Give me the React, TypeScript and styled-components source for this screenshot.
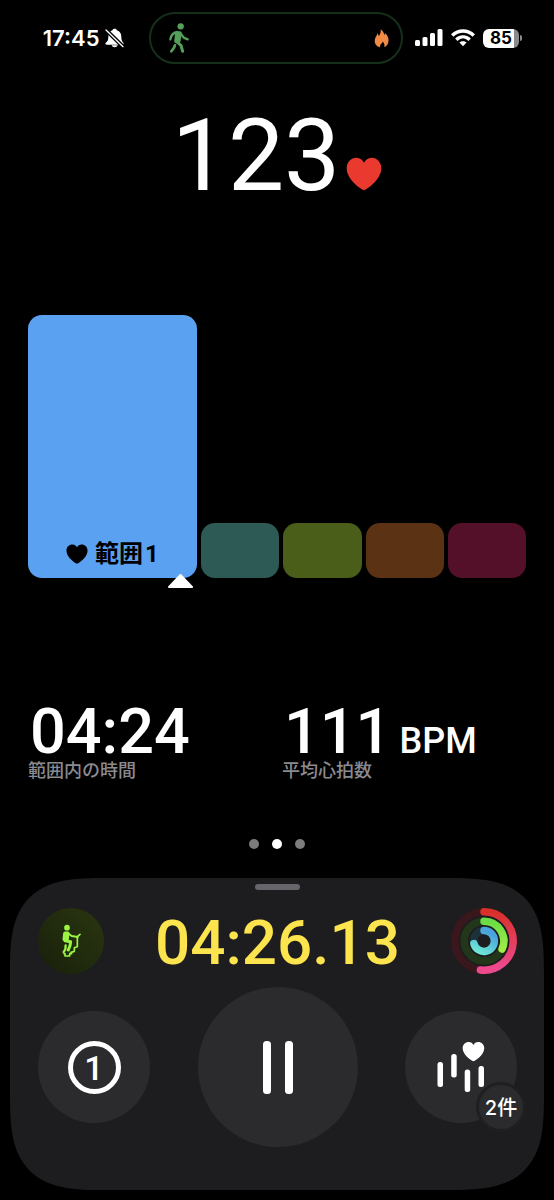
import React from "react";
import styled, { createGlobalStyle } from "styled-components";

const Global = createGlobalStyle`
  * { box-sizing: border-box; }
  html, body { margin: 0; background: #000; }
  body {
    color: #fff;
    font-family: Inter, "Noto Sans CJK JP", sans-serif;
    -webkit-font-smoothing: antialiased;
  }
  button { font: inherit; color: inherit; border: 0; padding: 0; background: none; cursor: pointer; }
  p, h1, dl, dd, dt { margin: 0; font-weight: inherit; }
  svg { display: block; flex: none; }
`;

const NUMERIC = `Roboto, "Noto Sans CJK JP", sans-serif`;

const Screen = styled.div`
  min-height: 100vh;
  display: flex;
  flex-direction: column;
  padding: 12px 10px 10px;
`;

const StatusBar = styled.header`
  display: grid;
  grid-template-columns: 1fr 254px 1fr;
  align-items: center;
  padding-right: 3px;
  height: 52px;
`;

const StatusGroup = styled.div<{ $end?: boolean }>`
  display: flex;
  align-items: center;
  justify-content: flex-end;
  gap: ${(p) => (p.$end ? "8px" : "5px")};
  padding-right: ${(p) => (p.$end ? "19px" : "25px")};
`;

const Clock = styled.time`
  font-size: 22px;
  line-height: 28px;
  font-weight: 600;
`;

const Island = styled.div`
  height: 52px;
  border: 2px solid #15301a;
  border-radius: 26px;
  display: flex;
  align-items: center;
  justify-content: space-between;
  padding: 0 12px 0 16px;
`;

const Battery = styled.div`
  display: flex;
  align-items: center;
  gap: 1px;
`;

const BatteryBody = styled.div`
  width: 36px;
  height: 19px;
  border-radius: 6px;
  background: linear-gradient(90deg, #fff 85%, #8b8b8b 85%);
  color: #000;
  font-size: 17px;
  line-height: 19px;
  font-weight: 700;
  text-align: center;
`;

const BatteryCap = styled.div`
  width: 2px;
  height: 6px;
  border-radius: 0 2px 2px 0;
  background: #8b8b8b;
`;

const Metrics = styled.main`
  flex: 1;
  padding: 41px 18px 0;
`;

const HeartRate = styled.h1`
  display: flex;
  justify-content: center;
  align-items: flex-end;
  gap: 6px;
  height: 100px;
  font-family: ${NUMERIC};
  font-size: 100px;
  line-height: 98px;
  font-weight: 400;
  svg { margin-bottom: 14px; }
`;

const Zones = styled.div`
  display: grid;
  grid-template-columns: minmax(0, 216fr) repeat(4, minmax(0, 100fr));
  gap: 4px;
  align-items: end;
  margin-top: 110px;
`;

const Zone = styled.div<{ $color: string; $active?: boolean }>`
  position: relative;
  height: ${(p) => (p.$active ? "263px" : "55px")};
  border-radius: 14px;
  background: ${(p) => p.$color};
`;

const ZoneLabel = styled.div`
  height: 100%;
  display: flex;
  align-items: flex-end;
  justify-content: center;
  gap: 7px;
  padding-bottom: 8px;
  color: #000;
  font-family: ${NUMERIC};
  font-size: 24px;
  line-height: 32px;
  font-weight: 700;
  svg { margin-bottom: 6px; }
`;

const ZoneNumber = styled.span`
  margin-left: 2px;
`;

const ZoneMarker = styled.svg`
  position: absolute;
  right: 4px;
  bottom: -10px;
`;

const Stats = styled.dl`
  display: grid;
  grid-template-columns: 1fr 1fr;
  gap: 10px;
  margin-top: 122px;
`;

const Stat = styled.div`
  display: flex;
  flex-direction: column-reverse;
`;

const StatValue = styled.dd`
  display: flex;
  align-items: baseline;
  gap: 8px;
  height: 61px;
  padding-left: 2px;
  font-family: ${NUMERIC};
  font-size: 63px;
  line-height: 64px;
  font-weight: 500;
`;

const Unit = styled.span`
  font-size: 36px;
  line-height: 36px;
`;

const StatName = styled.dt`
  color: #8a8a8f;
  font-size: 18px;
  line-height: 20px;
  font-weight: 500;
`;

const Pager = styled.nav`
  display: flex;
  justify-content: center;
  gap: 13px;
  margin-top: 58px;
  padding-bottom: 29px;
`;

const Dot = styled.button<{ $on?: boolean }>`
  width: 10px;
  height: 10px;
  border-radius: 50%;
  background: ${(p) => (p.$on ? "#fff" : "#7c7c7c")};
`;

const Panel = styled.section`
  background: #1d1d1f;
  border-radius: 68px;
  padding: 6px 27px 43px 28px;
  @supports (corner-shape: superellipse(1.6)) {
    border-radius: 96px;
    corner-shape: superellipse(1.6);
  }
`;

const Grabber = styled.div`
  width: 45px;
  height: 6px;
  margin: 0 auto;
  border-radius: 3px;
  background: #66656b;
`;

const TimerRow = styled.div`
  display: flex;
  align-items: center;
  justify-content: space-between;
  margin-top: 18px;
`;

const WorkoutBadge = styled.div`
  width: 66px;
  height: 66px;
  border-radius: 50%;
  background: linear-gradient(45deg, #18200a, #2a3611);
  display: grid;
  place-items: center;
`;

const Timer = styled.time`
  height: 66px;
  color: #fbe44d;
  font-family: ${NUMERIC};
  font-size: 62px;
  line-height: 70px;
  font-weight: 500;
`;

const Controls = styled.div`
  display: flex;
  align-items: center;
  justify-content: space-between;
  margin-top: 13px;
`;

const RoundButton = styled.button<{ $size: number }>`
  position: relative;
  width: ${(p) => p.$size}px;
  height: ${(p) => p.$size}px;
  border-radius: 50%;
  background: #2b2b2d;
  display: grid;
  place-items: center;
`;

const LapNumber = styled.span`
  width: 53px;
  height: 53px;
  border: 5px solid #fff;
  border-radius: 50%;
  font-family: ${NUMERIC};
  font-size: 34px;
  line-height: 44px;
  font-weight: 500;
  text-align: center;
`;

const CountBadge = styled.span`
  position: absolute;
  right: -9px;
  bottom: -9px;
  width: 50px;
  height: 50px;
  border: 3px solid #1f1f21;
  border-radius: 50%;
  background: #2b2b2d;
  font-size: 20px;
  line-height: 46px;
  font-weight: 500;
  text-align: center;
  white-space: nowrap;
`;

const HEART =
  "M50 94 C46 94 2 66 2 32 C2 14 14 2 29 2 C39 2 46 8 50 16 C54 8 61 2 71 2 C86 2 98 14 98 32 C98 66 54 94 50 94 Z";

const Heart = ({ width, height, color }: { width: number; height: number; color: string }) => (
  <svg width={width} height={height} viewBox="0 0 100 96" preserveAspectRatio="none" aria-hidden="true">
    <path d={HEART} fill={color} />
  </svg>
);

const MutedBell = () => (
  <svg width="19" height="20" viewBox="0 0 57 60" aria-hidden="true">
    <path
      d="M29 2c4 0 6 2 6.500 5C45 10 49 17 49 27c0 9 2 13 6 17 2 3 0 6-3 6H6c-4 0-6-3-4-6 6-4 8-8 8-17 0-10 4-17 12-20C23 4 25 2 29 2zM20 52h18c-1 4-5 6-9 6s-8-2-9-6z"
      fill="#fff"
    />
    <path d="M1 4L55 57" stroke="#000" strokeWidth="12" />
    <path d="M3 6L54 56" stroke="#fff" strokeWidth="4" strokeLinecap="round" />
  </svg>
);

const WalkIcon = () => (
  <svg width="22" height="32" viewBox="500 67 66 96" fill="none" stroke="#549f59" strokeLinecap="round" strokeLinejoin="round" aria-hidden="true">
    <circle cx="541" cy="80" r="9.500" fill="#549f59" stroke="none" />
    <path d="M530 97c-13 3-18 9-20 22" strokeWidth="7" />
    <path d="M530 100h9l-4 25h-8z" fill="#549f59" strokeWidth="11" />
    <path d="M543 104l7 10 12 5" strokeWidth="7" />
    <path d="M529 126l13 11 5 18" strokeWidth="9" />
    <path d="M524 137l-3 7-8 11" strokeWidth="8" />
  </svg>
);

const FlameIcon = () => (
  <svg width="15" height="19" viewBox="290 85 45 58" aria-hidden="true">
    <path
      d="M310 86c6 5 10 10 11 17 2-2 2-4 2-6 8 7 12 16 11 25-1 10-6 16-13 19 2-7 0-13-5-18 0 6-8 8-8 14 0 2 0 3 1 4-11-2-18-10-17-20 1-12 7-15 8-22 3 2 4 5 4 8 5-6 7-12 6-21z"
      fill="#f18a45"
    />
  </svg>
);

const SignalIcon = () => (
  <svg width="28" height="18" viewBox="0 0 28 18" fill="#fff" aria-hidden="true">
    <rect x="0" y="11" width="5" height="6" rx="1.500" />
    <rect x="7.500" y="8" width="5" height="9" rx="1.500" />
    <rect x="15" y="4" width="5" height="13" rx="1.500" />
    <rect x="22.500" y="0" width="5" height="17" rx="1.500" />
  </svg>
);

const WifiIcon = () => (
  <svg width="24" height="18" viewBox="0 0 24 18" fill="none" stroke="#fff" strokeWidth="3.400" aria-hidden="true">
    <path d="M1.200 6.500C7.500 0.400 16.500 0.400 22.800 6.500" />
    <path d="M5.300 10.700c4-3.800 9.400-3.800 13.400 0" />
    <path d="M12 17.300l-3.600-3.700c2-1.800 5.200-1.800 7.200 0z" fill="#fff" stroke="none" />
  </svg>
);

const StepperIcon = () => (
  <svg width="20" height="34" viewBox="190 282 60 102" fill="none" stroke="#9bf443" strokeLinejoin="round" strokeLinecap="round" aria-hidden="true">
    <circle cx="208" cy="293" r="8.500" fill="#9bf443" stroke="none" />
    <path d="M202 310h8l-2 18h-8z" fill="#9bf443" strokeWidth="11" />
    <path d="M212 311l10 7 18 3" strokeWidth="6" />
    <path d="M247 313l-8 7v30l-9 3v11l-10 3" strokeWidth="5" />
    <path d="M202 332l17 3-2 12-5 13" strokeWidth="9" />
    <path d="M204 346l-1 12-5 8" strokeWidth="7" />
    <path d="M197 371h5v7h14v-7h8" strokeWidth="5" strokeLinecap="butt" />
  </svg>
);

const RINGS = [
  { r: 29.2, sweep: 187, from: "#d9302b", to: "#ec4a8d", track: "#3a171c" },
  { r: 19.8, sweep: 114, from: "#6bdc45", to: "#a0ee46", track: "#22371a" },
  { r: 10.4, sweep: 256, from: "#4aa3dc", to: "#6fe9d3", track: "#1c3139" },
];

const ActivityRings = () => (
  <svg width="66" height="66" viewBox="0 0 66 66" fill="none" strokeWidth="7.500" role="img" aria-label="アクティビティ">
    {RINGS.map(({ r, sweep, from, to, track }, i) => {
      const a = (sweep * Math.PI) / 180;
      const x = 33 + r * Math.sin(a);
      const y = 33 - r * Math.cos(a);
      return (
        <g key={i}>
          <linearGradient id={`ring${i}`} gradientUnits="userSpaceOnUse" x1="33" y1={33 - r} x2={i === 2 ? 33 - r : 33} y2={i === 1 ? 42 : 33 + r * 0.9}>
            <stop offset="0" stopColor={from} />
            <stop offset="1" stopColor={to} />
          </linearGradient>
          <circle cx="33" cy="33" r={r} stroke={track} />
          <path d={`M33 ${33 - r}A${r} ${r} 0 ${sweep > 180 ? 1 : 0} 1 ${x} ${y}`} stroke={`url(#ring${i})`} strokeLinecap="round" />
        </g>
      );
    })}
  </svg>
);

const PauseIcon = () => (
  <svg width="30" height="53" viewBox="0 0 30 53" fill="#fff" aria-hidden="true">
    <rect width="8" height="53" rx="3.500" />
    <rect x="22" width="8" height="53" rx="3.500" />
  </svg>
);

const ZonesIcon = () => (
  <svg width="48" height="50" viewBox="0 0 48 50" fill="#fff" aria-hidden="true">
    <rect x="0.500" y="20" width="5.500" height="25" rx="2.500" />
    <rect x="14.200" y="12" width="5.500" height="23.500" rx="2.500" />
    <rect x="27.700" y="27.500" width="5.500" height="22.500" rx="2.500" />
    <rect x="41.500" y="24" width="5.500" height="21" rx="2.500" />
    <path d={HEART} transform="translate(25.200 -.4) scale(.225 .21)" />
  </svg>
);

export default function App() {
  return (
    <Screen>
      <Global />
      <StatusBar>
        <StatusGroup>
          <Clock>17:45</Clock>
          <MutedBell />
        </StatusGroup>
        <Island>
          <WalkIcon />
          <FlameIcon />
        </Island>
        <StatusGroup $end>
          <SignalIcon />
          <WifiIcon />
          <Battery>
            <BatteryBody>85</BatteryBody>
            <BatteryCap />
          </Battery>
        </StatusGroup>
      </StatusBar>

      <Metrics>
        <HeartRate>
          123
          <Heart width={36} height={34} color="#ea3a30" />
        </HeartRate>

        <Zones>
          <Zone $color="#5ba1f2" $active>
            <ZoneLabel>
              <Heart width={22} height={20} color="#000" />
              <span>
                範囲<ZoneNumber>1</ZoneNumber>
              </span>
            </ZoneLabel>
            <ZoneMarker width="25" height="14" viewBox="0 0 25 14" aria-hidden="true">
              <path d="M12.500 1L24 13H1z" fill="#fff" stroke="#fff" strokeWidth="2" strokeLinejoin="round" />
            </ZoneMarker>
          </Zone>
          <Zone $color="#2d5a55" />
          <Zone $color="#4a5e19" />
          <Zone $color="#5b3213" />
          <Zone $color="#541029" />
        </Zones>

        <Stats>
          <Stat>
            <StatName>範囲内の時間</StatName>
            <StatValue>04:24</StatValue>
          </Stat>
          <Stat>
            <StatName>平均心拍数</StatName>
            <StatValue>
              111<Unit>BPM</Unit>
            </StatValue>
          </Stat>
        </Stats>
      </Metrics>

      <Pager aria-label="ページ">
        <Dot aria-label="1" />
        <Dot $on aria-label="2" aria-current="page" />
        <Dot aria-label="3" />
      </Pager>

      <Panel>
        <Grabber />
        <TimerRow>
          <WorkoutBadge>
            <StepperIcon />
          </WorkoutBadge>
          <Timer>04:26.13</Timer>
          <ActivityRings />
        </TimerRow>
        <Controls>
          <RoundButton $size={112} aria-label="ラップ 1">
            <LapNumber>1</LapNumber>
          </RoundButton>
          <RoundButton $size={160} aria-label="一時停止">
            <PauseIcon />
          </RoundButton>
          <RoundButton $size={112} aria-label="心拍数範囲 2件">
            <ZonesIcon />
            <CountBadge>2件</CountBadge>
          </RoundButton>
        </Controls>
      </Panel>
    </Screen>
  );
}
